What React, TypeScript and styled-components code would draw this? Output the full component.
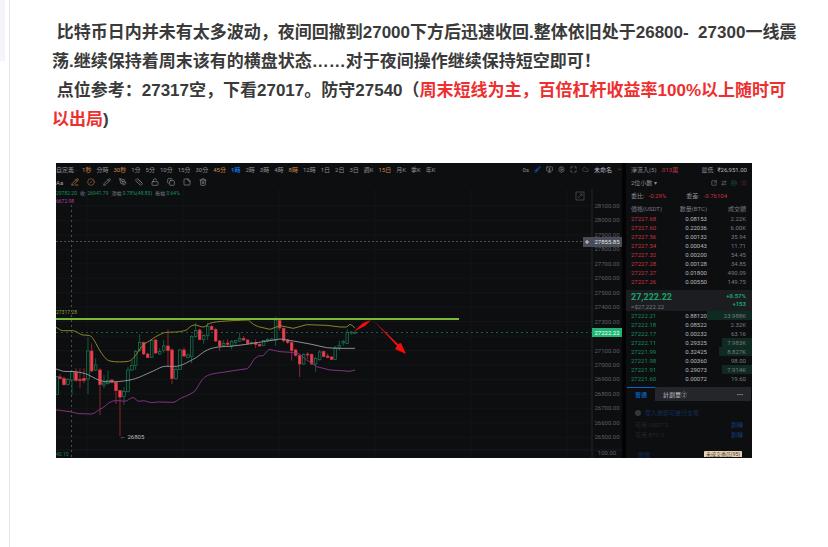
import React from "react";
import styled, { createGlobalStyle } from "styled-components";
import {
  PencilLine,
  Pencil,
  CircleSlash,
  PenTool,
  Ruler,
  LockOpen,
  Copy,
  StickyNote,
  Trash2,
  Brush,
  MonitorDown,
  Settings,
  Maximize,
  Cloud,
  ChevronDown,
  ArrowRightLeft,
  Rows3,
  AlignJustify,
  SquareArrowOutUpRight,
} from "lucide-react";

const GlobalStyle = createGlobalStyle`
  * { box-sizing: border-box; }
  body { margin: 0; background: #fff; }
`;

const cjk = `"Liberation Sans", "Noto Sans CJK SC", sans-serif`;
const cjkTc = `Roboto, "Noto Sans CJK TC", sans-serif`;

const Page = styled.div`
  display: flex;
  min-height: 100vh;
  font-family: ${cjk};
`;
const Rail = styled.aside`
  width: 10px;
  flex: none;
  border-right: 1px solid #e4e4ea;
`;
const RailBlock = styled.div`
  width: 5px;
  height: 61px;
  background: #f4f4fb;
`;
const Article = styled.main`
  flex: 1;
  min-width: 0;
  padding: 18px 24px 0 42px;
`;
const Paragraph = styled.p`
  margin: 0;
  font-size: 17px;
  line-height: 29px;
  font-weight: 700;
  color: #3a3a3a;
  white-space: pre-wrap;
`;
const Warn = styled.span`
  color: #ee2f2f;
`;

const Terminal = styled.figure`
  margin: 29px 52px 0 4px;
  display: grid;
  grid-template-columns: 1fr 126px;
  background: #0d0e10;
  color: #8b8f98;
  font-family: ${cjkTc};
  font-size: 6px;
  line-height: 9px;
  overflow: hidden;
`;
const ChartSide = styled.section`
  min-width: 0;
  display: flex;
  flex-direction: column;
  border-right: 4px solid #030304;
`;
const Bar = styled.div`
  display: flex;
  align-items: center;
  height: 12px;
  gap: 5px;
  svg {
    flex: none;
  }
`;
const ToolBar = styled(Bar)`
  height: 14px;
  gap: 8px;
`;
const Fill = styled.span`
  flex: 1;
`;
const TextButton = styled.button<{ $tone?: string; $strong?: boolean }>`
  border: 0;
  padding: 0;
  background: none;
  font: inherit;
  white-space: nowrap;
  color: ${(p) => p.$tone ?? "#8b8f98"};
  font-weight: ${(p) => (p.$strong ? 700 : 400)};
`;
const IconButton = styled.button<{ $tone?: string }>`
  display: flex;
  border: 0;
  padding: 0;
  background: none;
  color: ${(p) => p.$tone ?? "#8b8f98"};
`;
const ViewTools = styled.div`
  display: flex;
  align-items: center;
  gap: 5px;
`;
const ChartBox = styled.div`
  position: relative;
`;
const Plot = styled.svg`
  display: block;
  width: 100%;
  height: auto;
`;
const Legend = styled.div`
  position: absolute;
  top: 0;
  left: 0;
  font-size: 5px;
  line-height: 8px;
  color: #18925f;
  white-space: nowrap;
`;
const LegendRow = styled.div`
  display: flex;
  gap: 3px;
`;
const Grey = styled.span`
  color: #7b7f87;
`;
const Magenta = styled.div`
  color: #b5409f;
`;

const BookSide = styled.section`
  display: flex;
  flex-direction: column;
  min-width: 0;
  height: 295px;
  overflow: hidden;
`;
const PanelRow = styled.div<{ $h?: number }>`
  display: flex;
  align-items: center;
  justify-content: space-between;
  gap: 4px;
  flex: none;
  height: ${(p) => p.$h ?? 13}px;
  padding: 0 5px;
  white-space: nowrap;
`;
const Pair = styled.span`
  display: flex;
  align-items: center;
  gap: 4px;
`;
const Tint = styled.span<{ $c: string }>`
  color: ${(p) => p.$c};
`;
const Book = styled.table`
  flex: none;
  width: 100%;
  border-collapse: collapse;
  table-layout: fixed;
  th,
  td {
    height: 9px;
    padding: 0;
    line-height: 9px;
    text-align: right;
    font-weight: 400;
    white-space: nowrap;
  }
  th {
    height: 12px;
    color: #777b84;
  }
  th:first-child,
  td:first-child {
    width: 36px;
    padding-left: 5px;
    text-align: left;
  }
  th:last-child,
  td:last-child {
    padding-right: 6px;
    color: #777b84;
  }
`;
const Price = styled.td<{ $up?: boolean }>`
  color: ${(p) => (p.$up ? "#15895d" : "#c2343f")};
`;
const Amount = styled.td`
  color: #b4b7be;
`;
const Turnover = styled.td<{ $depth?: number }>`
  background: linear-gradient(to left, #0f2a21 ${(p) => p.$depth ?? 0}%, transparent ${(p) => p.$depth ?? 0}%);
`;
const Last = styled.div`
  flex: none;
  display: flex;
  justify-content: space-between;
  height: 21px;
  margin-top: 4px;
  padding: 2px 6px 0 5px;
  background: #1b1d20;
  color: #18a56d;
  font-weight: 700;
`;
const BigPrice = styled.div`
  font-size: 9px;
  line-height: 11px;
`;
const SubPrice = styled.div`
  line-height: 7px;
  font-weight: 400;
  color: #777b84;
`;
const Change = styled.div`
  text-align: right;
  line-height: 8px;
`;
const Tabs = styled.div`
  flex: none;
  display: flex;
  height: 14px;
  margin: 4px 1px 0 1px;
  background: #24262b;
`;
const Tab = styled.button<{ $on?: boolean }>`
  border: 0;
  border-top: 1px solid ${(p) => (p.$on ? "#0b63c9" : "transparent")};
  background: ${(p) => (p.$on ? "#0d0e10" : "none")};
  color: ${(p) => (p.$on ? "#0b63c9" : "#a0a4ac")};
  padding: 0 8px;
  font: inherit;
  font-weight: 500;
`;
const Form = styled.div`
  flex: none;
  padding-top: 5px;
  color: #25282d;
`;
const Dot = styled.span`
  width: 6px;
  height: 6px;
  border-radius: 50%;
  background: #34373c;
`;
const Bottom = styled.div`
  display: flex;
  align-items: center;
  justify-content: space-between;
  height: 6px;
  padding: 0 10px 0 12px;
  margin-top: 12px;
`;
const Orders = styled.button`
  border: 0;
  border-radius: 1px 1px 0 0;
  padding: 0 2px;
  background: #e9d3b4;
  color: #40352a;
  font: inherit;
  font-size: 5px;
  line-height: 6px;
`;

const orange = "#c98a4a";
const intervals: [string, string?, boolean?][] = [
  ["1秒", orange], ["分時"], ["30秒", orange], ["1分"], ["5分"], ["10分"], ["15分"], ["30分"],
  ["45分", orange], ["1時", "#1672e6", true], ["2時"], ["3時"], ["4時"], ["8時", orange], ["12時"],
  ["1日"], ["2日"], ["3日"], ["週K"], ["15日", orange], ["月K"], ["季K"], ["年K"],
];

const asks = [
  ["27227.68", "0.08153", "2.22K"],
  ["27227.60", "0.22036", "6.00K"],
  ["27227.56", "0.00132", "35.94"],
  ["27227.54", "0.00043", "11.71"],
  ["27227.32", "0.00200", "54.45"],
  ["27227.28", "0.00128", "34.85"],
  ["27227.27", "0.01800", "490.09"],
  ["27227.26", "0.00550", "149.75"],
];
const bids: [string, string, string, number][] = [
  ["27222.21", "0.88120", "23.988K", 100],
  ["27222.18", "0.08522", "2.32K", 0],
  ["27222.17", "0.00232", "63.16", 0],
  ["27222.11", "0.29325", "7.983K", 66],
  ["27221.99", "0.32425", "8.827K", 74],
  ["27221.98", "0.00360", "98.00", 0],
  ["27221.91", "0.29073", "7.914K", 66],
  ["27221.60", "0.00072", "19.60", 0],
];

const UP = 1;
const DOWN = 0;
/* [centre x, wick top, body top, body bottom, wick bottom, direction] */
const candles: number[][] = [
  [22, 228, 230, 283, 284, UP], [30, 222, 231, 235, 238, DOWN], [42, 230, 235, 254, 258, DOWN],
  [54, 234, 238, 253, 256, UP], [66, 210, 215, 240, 285, UP], [78, 205, 217, 241, 245, DOWN],
  [90, 205, 238, 242, 265, DOWN], [102, 205, 235, 242, 250, DOWN], [114, 112, 153, 237, 282, UP],
  [125, 130, 153, 213, 216, DOWN], [137, 175, 195, 210, 213, UP], [150, 205, 210, 254, 345, DOWN],
  [162, 225, 249, 255, 265, UP], [174, 212, 241, 250, 254, UP], [186, 238, 240, 246, 250, DOWN],
  [198, 245, 247, 272, 312, DOWN], [210, 270, 272, 291, 408, DOWN], [222, 262, 275, 290, 315, UP],
  [234, 200, 210, 275, 278, UP], [246, 180, 197, 210, 213, UP], [257, 150, 155, 197, 210, UP],
  [269, 103, 128, 152, 155, UP], [281, 125, 127, 162, 165, DOWN], [293, 158, 162, 173, 174, DOWN],
  [305, 120, 122, 172, 174, UP], [317, 117, 120, 159, 162, DOWN], [329, 145, 155, 162, 165, UP],
  [341, 120, 138, 152, 158, UP], [354, 88, 138, 151, 200, DOWN], [366, 145, 150, 236, 252, DOWN],
  [378, 200, 208, 236, 240, UP], [390, 146, 150, 208, 210, UP], [402, 143, 150, 168, 172, DOWN],
  [414, 160, 165, 172, 175, UP], [425, 105, 109, 170, 190, UP], [437, 68, 92, 110, 113, UP],
  [449, 86, 90, 119, 121, DOWN], [461, 103, 107, 119, 132, UP], [473, 68, 80, 106, 120, UP],
  [485, 74, 80, 89, 91, DOWN], [497, 85, 88, 123, 126, DOWN], [509, 120, 123, 138, 153, DOWN],
  [521, 120, 130, 137, 141, UP], [533, 118, 129, 133, 138, DOWN], [545, 120, 125, 138, 148, UP],
  [557, 120, 122, 128, 135, UP], [569, 98, 115, 123, 126, UP], [581, 108, 115, 120, 122, DOWN],
  [593, 117, 120, 131, 134, DOWN], [605, 124, 128, 131, 134, UP], [617, 118, 128, 133, 144, DOWN],
  [629, 130, 133, 138, 140, DOWN], [641, 120, 122, 137, 139, UP], [653, 114, 118, 123, 126, UP],
  [665, 114, 117, 121, 124, UP], [677, 50, 60, 121, 138, UP], [689, 55, 62, 84, 92, DOWN],
  [701, 82, 85, 122, 128, DOWN], [713, 116, 120, 128, 132, DOWN], [725, 122, 128, 152, 182, DOWN],
  [737, 146, 150, 166, 170, DOWN], [749, 162, 167, 192, 231, DOWN], [761, 160, 163, 192, 195, UP],
  [773, 156, 162, 165, 178, DOWN], [785, 160, 163, 192, 195, DOWN], [797, 170, 175, 192, 215, UP],
  [809, 150, 156, 178, 182, UP], [821, 152, 155, 170, 172, DOWN], [833, 160, 168, 172, 175, DOWN],
  [845, 168, 171, 178, 180, DOWN], [856, 138, 143, 178, 180, UP], [868, 122, 137, 143, 152, UP],
  [880, 120, 125, 129, 137, UP], [892, 88, 98, 130, 132, UP], [904, 93, 96, 99, 104, UP],
  [915, 94, 97, 100, 102, UP],
];

const bandTop =
  "M18 82C26 86 30 92 40 92H70C84 94 88 105 100 105C112 106 118 106 122 108C134 118 142 142 155 160C166 176 172 181 180 183C196 187 220 186 235 184C252 180 262 156 275 140C284 130 290 128 298 123C312 114 322 106 332 103C342 96 352 97 380 96C394 95 398 92 405 92C416 88 420 76 432 75C444 74 450 82 462 81C470 78 474 71 482 69C500 64 540 62 595 60L610 73L625 80L660 88L690 77L730 85L770 74L830 76L870 81L890 81L900 73L908 77L915 85";
const bandMid =
  "M18 207L40 214L75 215C92 217 104 220 114 224C130 232 144 242 165 245C190 247 220 244 240 240C262 236 280 226 310 213C326 206 332 200 345 199H380C396 196 404 192 440 172C456 160 462 154 472 150C486 143 504 140 540 139L590 133L640 125L690 117L730 123L780 132L830 143L860 145H915";
const bandLow =
  "M18 330C30 330 44 334 60 335C74 338 80 341 90 341L125 342C136 340 142 332 150 328C162 324 172 308 188 303C206 300 216 305 230 303C240 296 244 293 250 293C258 296 260 304 268 304C276 302 284 302 290 304C300 310 310 307 325 306L372 307C384 302 392 292 404 290C418 284 428 278 434 274C448 256 454 238 464 232C474 224 490 220 520 217L550 212L592 206L600 198L612 178L625 168L640 167L657 148L690 155L720 157L745 160L770 180L800 200L840 210L875 212L900 214L915 210";

const axis = [
  "28100.00", "28000.00", "27900.00", "27800.00", "27700.00", "27600.00", "27500.00", "27400.00", "27300.00",
  "", "27100.00", "27000.00", "26900.00", "26800.00", "26700.00", "26600.00", "26500.00",
];
const axisY = (i: number) => 17 + i * 14.45;

function Chart() {
  return (
    <Plot viewBox="0 0 566 269" role="img" aria-label="BTC">
      {axis.map((_, i) => (
        <line key={i} x1="0" x2="536" y1={axisY(i)} y2={axisY(i)} stroke="#131518" />
      ))}
      {[31, 127, 223, 319, 415, 511].map((x) => (
        <line key={x} x1={x} x2={x} y1="0" y2="269" stroke="#131518" />
      ))}
      <line x1="536" x2="536" y1="0" y2="269" stroke="#25282c" />
      <line x1="0" x2="566" y1="261" y2="261" stroke="#191b1e" />
      <line x1="15.5" x2="15.5" y1="16" y2="269" stroke="#4b4e53" strokeDasharray="2 3" />
      <line x1="0" x2="528" y1="52.5" y2="52.5" stroke="#4b4e53" strokeDasharray="2 2" />
      <line x1="0" x2="536" y1="143.5" y2="143.5" stroke="#1c5b45" strokeDasharray="2 3" />
      <g transform="translate(-6 111) scale(0.3333)" fill="none">
        {candles.map(([x, wt, bt, bb, wb, up]) => (
          <g key={x} stroke={up ? "#19805a" : "#c93545"} strokeWidth="2">
            <path d={`M${x} ${wt}V${bt}M${x} ${bb}V${wb}`} />
            <rect x={x - 4} y={bt} width="8" height={bb - bt} fill={up ? "#0d1512" : "#f0404f"} />
          </g>
        ))}
        <path d={bandTop} stroke="#8c8627" strokeWidth="3" />
        <path d={bandMid} stroke="#8f9095" strokeWidth="3" />
        <path d={bandLow} stroke="#85327f" strokeWidth="3" />
      </g>
      <line x1="0" x2="403" y1="130" y2="130" stroke="#78b935" strokeWidth="2" />
      <g fill="#f50d0d">
        <path d="M298 142.500L307 134L315 131L309 137Z" />
        <path d="M318 132L342 155L345 154L350 165L339 160L341 157Z" />
      </g>
      <g fontSize="6" fontFamily="Roboto, sans-serif">
        <text x="0" y="125" fontSize="5" fill="#91a33a">27317.28</text>
        <text x="64" y="250" fill="#b9bbc0">← 26805</text>
        <text x="0" y="267" fontSize="5" fill="#16825b">40.10</text>
        <g fill="#5c6067" textAnchor="middle">
          {axis.map((label, i) => (
            <text key={i} x="551" y={axisY(i) + 2}>{label}</text>
          ))}
          <text x="551" y="266">100.00</text>
        </g>
        <rect x="527" y="48" width="39" height="10" fill="#474c57" />
        <path d="M531 51v4M529 53h4" stroke="#c9ccd2" />
        <text x="551" y="55" fill="#e1e3e7" textAnchor="middle">27855.85</text>
        <rect x="536" y="139" width="30" height="9" fill="#1fb574" />
        <text x="551" y="146" fill="#fff" textAnchor="middle">27222.22</text>
      </g>
      <g stroke="#3d4045" fill="none">
        <rect x="520" y="3" width="8" height="8" />
        <path d="M522 9l4-4M524 5h2v2" />
      </g>
    </Plot>
  );
}

const drawTools = [
  { name: "畫線", Icon: PencilLine, tone: orange },
  { name: "隱藏", Icon: CircleSlash, tone: "#a5673e" },
  { name: "畫筆", Icon: Pencil },
  { name: "鋼筆", Icon: PenTool },
  { name: "測量", Icon: Ruler },
  { name: "鎖定", Icon: LockOpen },
  { name: "複製", Icon: Copy },
  { name: "備註", Icon: StickyNote },
  { name: "刪除", Icon: Trash2 },
];
const viewTools = [
  { name: "畫圖", Icon: Brush, tone: "#1672e6" },
  { name: "截圖", Icon: MonitorDown },
  { name: "設定", Icon: Settings },
  { name: "全螢幕", Icon: Maximize },
  { name: "雲端", Icon: Cloud, tone: "#54575e" },
];
const bookViews = [
  { name: "彈出", Icon: SquareArrowOutUpRight, tone: "#8b8f98" },
  { name: "切換", Icon: ArrowRightLeft, tone: "#8b8f98" },
  { name: "買單", Icon: Rows3, tone: "#245543" },
  { name: "賣單", Icon: AlignJustify, tone: "#6d2730" },
];

export default function App() {
  return (
    <Page>
      <GlobalStyle />
      <Rail>
        <RailBlock />
      </Rail>
      <Article>
        <Paragraph>
          {" 比特币日内并未有太多波动，夜间回撤到27000下方后迅速收回.整体依旧处于26800-  27300一线震"}
          <br />
          荡.继续保持着周末该有的横盘状态……对于夜间操作继续保持短空即可！
        </Paragraph>
        <Paragraph>
          {" 点位参考：27317空，下看27017。防守27540（"}
          <Warn>
            周末短线为主，百倍杠杆收益率100%以上随时可
            <br />
            以出局
          </Warn>
          )
        </Paragraph>
        <Terminal>
          <ChartSide>
            <Bar>
              <TextButton>自定義 ·</TextButton>
              {intervals.map(([label, tone, strong]) => (
                <TextButton key={label} $tone={tone} $strong={strong}>{label}</TextButton>
              ))}
              <Fill />
              <ViewTools>
                <TextButton>0s</TextButton>
                {viewTools.map(({ name, Icon, tone }) => (
                  <IconButton key={name} $tone={tone} aria-label={name}><Icon size={7} /></IconButton>
                ))}
                <TextButton $tone="#b4b7be">未命名</TextButton>
                <ChevronDown size={5} />
              </ViewTools>
            </Bar>
            <ToolBar>
              <TextButton $tone="#a0a4ac">Aa</TextButton>
              {drawTools.map(({ name, Icon, tone }) => (
                <IconButton key={name} $tone={tone} aria-label={name}><Icon size={8} /></IconButton>
              ))}
            </ToolBar>
            <ChartBox>
              <Chart />
              <Legend>
                <LegendRow>
                  <span>29782.20</span>
                  <span><Grey>收:</Grey> 26941.79</span>
                  <span><Grey>漲幅</Grey> 0.78%(48.83)</span>
                  <span><Grey>振幅</Grey> 0.64%</span>
                </LegendRow>
                <Magenta>6672.98</Magenta>
              </Legend>
            </ChartBox>
          </ChartSide>
          <BookSide>
            <PanelRow>
              <Pair>淨流入(5) <Tint $c="#c2343f">.013萬</Tint></Pair>
              <Pair>最低 <Tint $c="#b4b7be">₹26,951.00</Tint></Pair>
            </PanelRow>
            <PanelRow>
              <TextButton>2位小數 ▾</TextButton>
              <Pair>
                {bookViews.map(({ name, Icon, tone }) => (
                  <IconButton key={name} $tone={tone} aria-label={name}><Icon size={6} /></IconButton>
                ))}
              </Pair>
            </PanelRow>
            <PanelRow>
              <Pair>委比: <Tint $c="#c2343f">-0.29%</Tint></Pair>
              <Pair>委差: <Tint $c="#c2343f">-0.76104</Tint></Pair>
              <span />
            </PanelRow>
            <Book>
              <thead>
                <tr><th>價格(USDT)</th><th>數量(BTC)</th><th>成交額</th></tr>
              </thead>
              <tbody>
                {asks.map(([p, a, t]) => (
                  <tr key={p}><Price>{p}</Price><Amount>{a}</Amount><Turnover>{t}</Turnover></tr>
                ))}
              </tbody>
            </Book>
            <Last>
              <div>
                <BigPrice>27,222.22</BigPrice>
                <SubPrice>≈$27,222.22</SubPrice>
              </div>
              <div>
                <Change>+0.57%</Change>
                <Change>+153</Change>
              </div>
            </Last>
            <Book>
              <tbody>
                {bids.map(([p, a, t, d]) => (
                  <tr key={p}><Price $up>{p}</Price><Amount>{a}</Amount><Turnover $depth={d}>{t}</Turnover></tr>
                ))}
              </tbody>
            </Book>
            <Tabs>
              <Tab $on>普通</Tab>
              <Tab>計劃單②</Tab>
              <Fill />
              <Tab aria-label="更多">•••</Tab>
            </Tabs>
            <Form>
              <PanelRow $h={13}>
                <Pair><span /><Dot /><Tint $c="#122f57">登入後即可進行交易</Tint></Pair>
              </PanelRow>
              <PanelRow $h={10}><Pair><span />可用 USDT 0</Pair><Pair><Tint $c="#0f3d78">劃轉</Tint><span /></Pair></PanelRow>
              <PanelRow $h={10}><Pair><span />可用 BTC 0</Pair><Pair><Tint $c="#0f3d78">劃轉</Tint><span /></Pair></PanelRow>
              <Bottom>
                <Tint $c="#122f57">限價</Tint>
                <Orders>未成交委託(95)</Orders>
              </Bottom>
            </Form>
          </BookSide>
        </Terminal>
      </Article>
    </Page>
  );
}
